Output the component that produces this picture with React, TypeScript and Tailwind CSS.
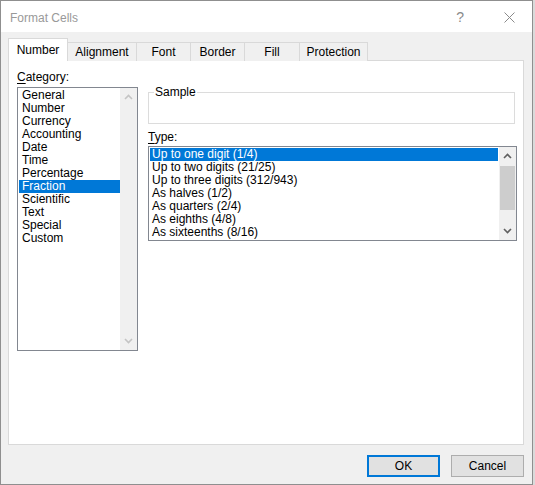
import React from "react";

const font = { fontFamily: '"Segoe UI", "Liberation Sans", Arial, sans-serif' };

function Chevron({ up, color }: { up: boolean; color: string }) {
  return (
    <svg width="9" height="6" viewBox="0 0 9 6">
      <polyline
        points={up ? "1,5 4.5,1.5 8,5" : "1,1 4.5,4.5 8,1"}
        fill="none"
        stroke={color}
        strokeWidth="1.6"
      />
    </svg>
  );
}

const categories = [
  "General",
  "Number",
  "Currency",
  "Accounting",
  "Date",
  "Time",
  "Percentage",
  "Fraction",
  "Scientific",
  "Text",
  "Special",
  "Custom",
];

const types = [
  "Up to one digit (1/4)",
  "Up to two digits (21/25)",
  "Up to three digits (312/943)",
  "As halves (1/2)",
  "As quarters (2/4)",
  "As eighths (4/8)",
  "As sixteenths (8/16)",
];

const tabs = ["Number", "Alignment", "Font", "Border", "Fill", "Protection"];
const tabWidths = [60, 69, 54, 54, 55, 68];

export default function App() {
  return (
    <div className="w-[535px] h-[485px] bg-[#dadada] flex text-[12px] text-black" style={font}>
      <div className="w-[533px] h-[485px] border border-[#8f8f8f] bg-[#f0f0f0] flex flex-col">
        {/* Title bar */}
        <div className="h-[31px] bg-white flex items-center pl-[9px] shrink-0">
          <span className="text-[12px] text-[#999999] mt-[2px]">Format Cells</span>
          <span className="ml-auto text-[14px] text-[#8a8a8a] mr-[40px] mt-[2px]">?</span>
          <svg width="11" height="11" viewBox="0 0 11 11" className="mr-[17px] mt-[2px]">
            <path d="M0.5,0.5 L10.5,10.5 M10.5,0.5 L0.5,10.5" stroke="#8a8a8a" strokeWidth="1" />
          </svg>
        </div>

        {/* Body */}
        <div className="flex flex-col pl-[7px] pt-[7px]">
          {/* Tabs */}
          <div className="flex items-end h-[22px] relative z-10">
            {tabs.map((t, i) =>
              i === 0 ? (
                <div
                  key={t}
                  className="h-[23px] bg-white border border-b-0 border-[#d9d9d9] flex items-center justify-center"
                  style={{ width: tabWidths[i] }}
                >
                  {t}
                </div>
              ) : (
                <div
                  key={t}
                  className="h-[19px] bg-[#f0f0f0] border border-l-0 border-b-0 border-[#d9d9d9] flex items-center justify-center"
                  style={{ width: tabWidths[i] }}
                >
                  {t}
                </div>
              )
            )}
          </div>
          {/* Panel */}
          <div className="w-[516px] h-[385px] -mt-[1px] bg-white border border-[#d9d9d9] flex pl-[8px] pt-[9px] gap-[10px]">
            {/* Category */}
            <div className="flex flex-col w-[121px]">
              <div className="h-[17px] leading-[14px]">
                <span className="underline underline-offset-2">C</span>ategory:
              </div>
              <div className="h-[264px] border border-[#828790] flex">
                <div className="flex-1 flex flex-col pt-[1px] pl-[1px]">
                  {categories.map((c) => (
                    <div
                      key={c}
                      className={
                        "h-[13px] leading-[13px] pl-[3px] " +
                        (c === "Fraction" ? "bg-[#0078d7] text-white" : "")
                      }
                    >
                      {c}
                    </div>
                  ))}
                </div>
                <div className="w-[17px] bg-[#f0f0f0] flex flex-col items-center justify-between pt-[6px] pb-[6px]">
                  <Chevron up color="#c4c4c4" />
                  <Chevron up={false} color="#c4c4c4" />
                </div>
              </div>
            </div>

            {/* Right column */}
            <div className="flex flex-col w-[369px]">
              <div className="w-[367px] h-[32px] mt-[22px] border border-[#dcdcdc] relative">
                <span className="absolute -top-[8px] left-[5px] bg-white px-[1px] leading-[14px]">Sample</span>
              </div>
              <div className="h-[22px] leading-[14px] pt-[6px]">
                <span className="underline underline-offset-2">T</span>ype:
              </div>
              <div className="h-[95px] border border-[#828790] flex">
                <div className="flex-1 flex flex-col pt-[1px] pl-[1px] pr-[1px]">
                  {types.map((t, i) => (
                    <div
                      key={t}
                      className={
                        "h-[13px] leading-[13px] pl-[2px] " + (i === 0 ? "bg-[#0078d7] text-white" : "")
                      }
                    >
                      {t}
                    </div>
                  ))}
                </div>
                <div className="w-[17px] bg-[#f0f0f0] flex flex-col items-center pt-[6px] pb-[6px]">
                  <Chevron up color="#606060" />
                  <div className="w-[15px] h-[44px] bg-[#cdcdcd] mt-[7px]" />
                  <div className="flex-1" />
                  <Chevron up={false} color="#606060" />
                </div>
              </div>
            </div>
          </div>
          {/* Buttons */}
          <div className="flex justify-end gap-[11px] pt-[10px] pr-[1px] w-[517px]">
            <button className="w-[73px] h-[22px] bg-[#e1e1e1] border-2 border-[#0078d7] flex items-center justify-center">
              OK
            </button>
            <button className="w-[73px] h-[22px] bg-[#e1e1e1] border border-[#adadad] flex items-center justify-center">
              Cancel
            </button>
          </div>
        </div>
      </div>
    </div>
  );
}
